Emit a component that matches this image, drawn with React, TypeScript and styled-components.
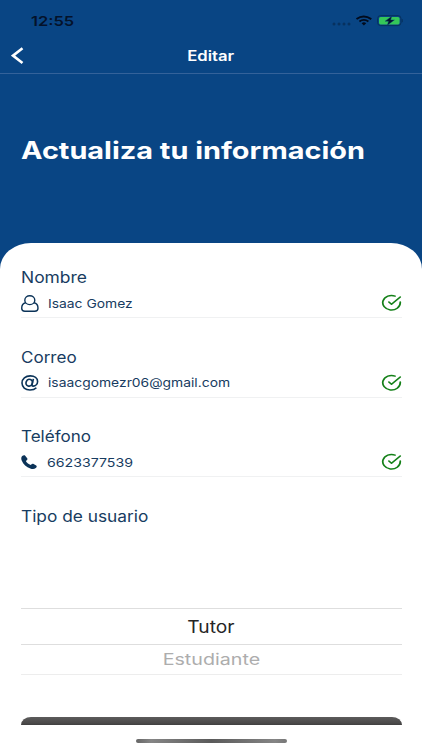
import React from "react";
import styled, { createGlobalStyle } from "styled-components";
import { FiCheckCircle } from "react-icons/fi";

const Global = createGlobalStyle`
  * { box-sizing: border-box; }
  body { margin: 0; background: #fff; font-family: Inter, "Liberation Sans", sans-serif; }
`;

const Screen = styled.div`
  width: 422px;
  height: 750px;
  display: flex;
  flex-direction: column;
  background: #094584;
  overflow: hidden;
`;

/* Wide lettering: glyphs are stretched sideways from the given origin. */
const Wide = styled.span<{ $size: number; $weight?: number; $stretch: number; $color: string; $origin?: string }>`
  display: block;
  white-space: nowrap;
  font-size: ${(p) => p.$size}px;
  line-height: 20px;
  font-weight: ${(p) => p.$weight ?? 400};
  color: ${(p) => p.$color};
  transform: scaleX(${(p) => p.$stretch});
  transform-origin: ${(p) => p.$origin ?? "left"} center;
`;

const StatusBar = styled.div`
  height: 37px;
  padding: 11px 19px 0 31px;
  display: flex;
  justify-content: space-between;
`;

const StatusIcons = styled.div`
  display: flex;
  padding-top: 4px;
  height: 16px;
`;

const NavBar = styled.div`
  height: 37px;
  padding: 1px 11px 0;
  display: grid;
  grid-template-columns: 14px 1fr 14px;
  align-items: center;
  justify-items: center;
  border-bottom: 1px solid #34629a;
`;

const Hero = styled.div`
  height: 169px;
  padding: 67px 20.5px 0;
`;

const Sheet = styled.main`
  flex: 1;
  background: #fff;
  border-radius: 31px 31px 0 0 / 26px 26px 0 0;
  padding: 25px 20.5px 0;
  display: flex;
  flex-direction: column;
`;

const Field = styled.div`
  height: 79.5px;
  flex: none;
`;

const FieldLine = styled.div`
  display: flex;
  align-items: center;
  height: 30px;
  padding-top: 2.5px;
  border-bottom: 1px solid #f0f1f2;
`;

const IconSlot = styled.div<{ $width: number }>`
  width: ${(p) => p.$width}px;
  height: 20px;
  display: flex;
  align-items: center;
  color: #0b3358;
`;

const Check = styled(FiCheckCircle).attrs({ preserveAspectRatio: "none" })`
  width: 21px;
  height: 17.500px;
  margin: -2px 0 0 auto;
  color: #148018;
`;

const Picker = styled.div`
  margin-top: 81.5px;
  display: flex;
  flex-direction: column;
`;

const Option = styled.div<{ $height: number; $line: string }>`
  height: ${(p) => p.$height}px;
  display: flex;
  align-items: center;
  justify-content: center;
  border-bottom: 1px solid ${(p) => p.$line};
`;

const SelectedOption = styled(Option)`
  border-top: 1px solid #dedede;
`;

const SubmitEdge = styled.div`
  height: 8.5px;
  flex: none;
  margin-top: 41.5px;
  border-radius: 10px 10px 0 0 / 8px 8px 0 0;
  background: linear-gradient(#5c5b5b, #4b4a4a 75%, #3f3f3f);
`;

const HomeIndicator = styled.div`
  width: 151px;
  height: 4px;
  flex: none;
  margin: 14px auto 0;
  border-radius: 3px;
  background: linear-gradient(90deg, #666, #858585 10%, #5a5a5a 50%, #858585 92%, #777);
`;

const NAVY = "#173c61";

const UserIcon = () => (
  <svg width="18" height="18" viewBox="0 0 18 18" fill="none" stroke="currentColor" strokeWidth="1.4">
    <ellipse cx="8.8" cy="5.2" rx="5" ry="4.4" />
    <path d="M4.7 7.8C2 8.2.7 10.6.7 13.3c0 1.8 1.3 3 3.2 3h9.8c2 0 3.3-1.2 3.3-3 0-2.7-1.3-5.1-4-5.5" />
  </svg>
);

const AtIcon = () => (
  <svg width="18" height="16" viewBox="0 0 18 16" fill="none" stroke="currentColor" strokeWidth="1.6">
    <ellipse cx="8.2" cy="7.7" rx="3.1" ry="3.4" transform="rotate(20 8.2 7.7)" />
    <path d="M12.4 3.9l-1.3 5.7c-.3 1.3.3 1.6 1.1 1.5 2.3-.2 4.4-2 4.4-4.6 0-3.3-3.1-5.6-7.3-5.6C4.5.9 1 3.9 1 8c0 4.1 3.3 7 8 7 2.5 0 4.9-.8 6.4-2.3" />
  </svg>
);

const PhoneIcon = () => (
  <svg width="16" height="15" viewBox="0 0 16 15" fill="currentColor">
    <path d="M1.2 1.1C2.2.2 3.5-.1 4.2.7l2 2.600c.6.9.2 1.600-.7 2.200-.6.4-.6.8-.1 1.400 1 1.200 2 2 3.300 2.700.7.400 1.100.400 1.600-.1.700-.8 1.500-1 2.300-.5l2.600 1.500c.9.600.6 1.800-.4 2.600-1.400 1.200-3.300 1.300-5.500.5C5.5 12.200 2.200 9.200.7 5.500.0 3.700.1 2.100 1.200 1.100z" />
  </svg>
);

const fields = [
  { label: "Nombre", value: "Isaac Gomez", icon: <UserIcon />, slot: 27.5, labelStretch: 1.125, stretch: 1.155 },
  { label: "Correo", value: "isaacgomezr06@gmail.com", icon: <AtIcon />, slot: 27.5, labelStretch: 1.1, stretch: 1.155 },
  { label: "Teléfono", value: "6623377539", icon: <PhoneIcon />, slot: 26.5, labelStretch: 1.1, stretch: 1.18 },
];

export default function App() {
  return (
    <Screen>
      <Global />
      <StatusBar>
        <Wide $size={13.5} $weight={600} $stretch={1.22} $color="#04122a">12:55</Wide>
        <StatusIcons>
          <svg width="72" height="12" viewBox="0 0 72 12">
            <g fill="#07315f">
              <circle cx="3" cy="9" r="1.5" />
              <circle cx="8" cy="9" r="1.5" />
              <circle cx="13" cy="9" r="1.5" />
              <circle cx="18" cy="9" r="1.5" />
            </g>
            <g fill="none" stroke="#020b1c" strokeWidth="1.9">
              <path d="M25.5 4.1q7-5.2 14.8 0" />
              <path d="M28.4 6.6q4.5-3.4 9 0" />
            </g>
            <path d="M30.6 8.2q2.3-1.8 4.6 0L32.9 10.4z" fill="#020b1c" />
            <rect x="46.6" y=".6" width="23.4" height="10" rx="3" fill="none" stroke="#07315f" />
            <rect x="48" y="2" width="20.6" height="7.4" rx="1.6" fill="#35c759" />
            <path d="M60.7 1.2l-6.6 5h3.4l-1.1 4 7-5.3h-3.7z" fill="#03142d" stroke="#094584" strokeWidth=".4" />
            <path d="M71.3 4.2v3" stroke="#07315f" />
          </svg>
        </StatusIcons>
      </StatusBar>
      <NavBar>
        <svg width="14" height="18" viewBox="0 0 14 18" fill="none" stroke="#fff" strokeWidth="2.6">
          <path d="M11.5 1.2L2 8.6l9.5 7.4" />
        </svg>
        <Wide $size={14} $weight={600} $stretch={1.19} $color="#fff" $origin="center">Editar</Wide>
      </NavBar>
      <Hero>
        <Wide $size={24} $weight={700} $stretch={1.202} $color="#fff">Actualiza tu información</Wide>
      </Hero>
      <Sheet>
        {fields.map((f) => (
          <Field key={f.label}>
            <Wide $size={15.5} $stretch={f.labelStretch} $color={NAVY}>{f.label}</Wide>
            <FieldLine>
              <IconSlot $width={f.slot}>{f.icon}</IconSlot>
              <Wide $size={12} $stretch={f.stretch} $color={NAVY}>{f.value}</Wide>
              <Check />
            </FieldLine>
          </Field>
        ))}
        <Wide $size={15.5} $stretch={1.115} $color={NAVY}>Tipo de usuario</Wide>
        <Picker>
          <SelectedOption $height={37} $line="#dedede">
            <Wide $size={17} $stretch={1.13} $color="#262626" $origin="center">Tutor</Wide>
          </SelectedOption>
          <Option $height={30} $line="#ededed">
            <Wide $size={15.5} $stretch={1.27} $color="#adadad" $origin="center">Estudiante</Wide>
          </Option>
        </Picker>
        <SubmitEdge />
        <HomeIndicator />
      </Sheet>
    </Screen>
  );
}
